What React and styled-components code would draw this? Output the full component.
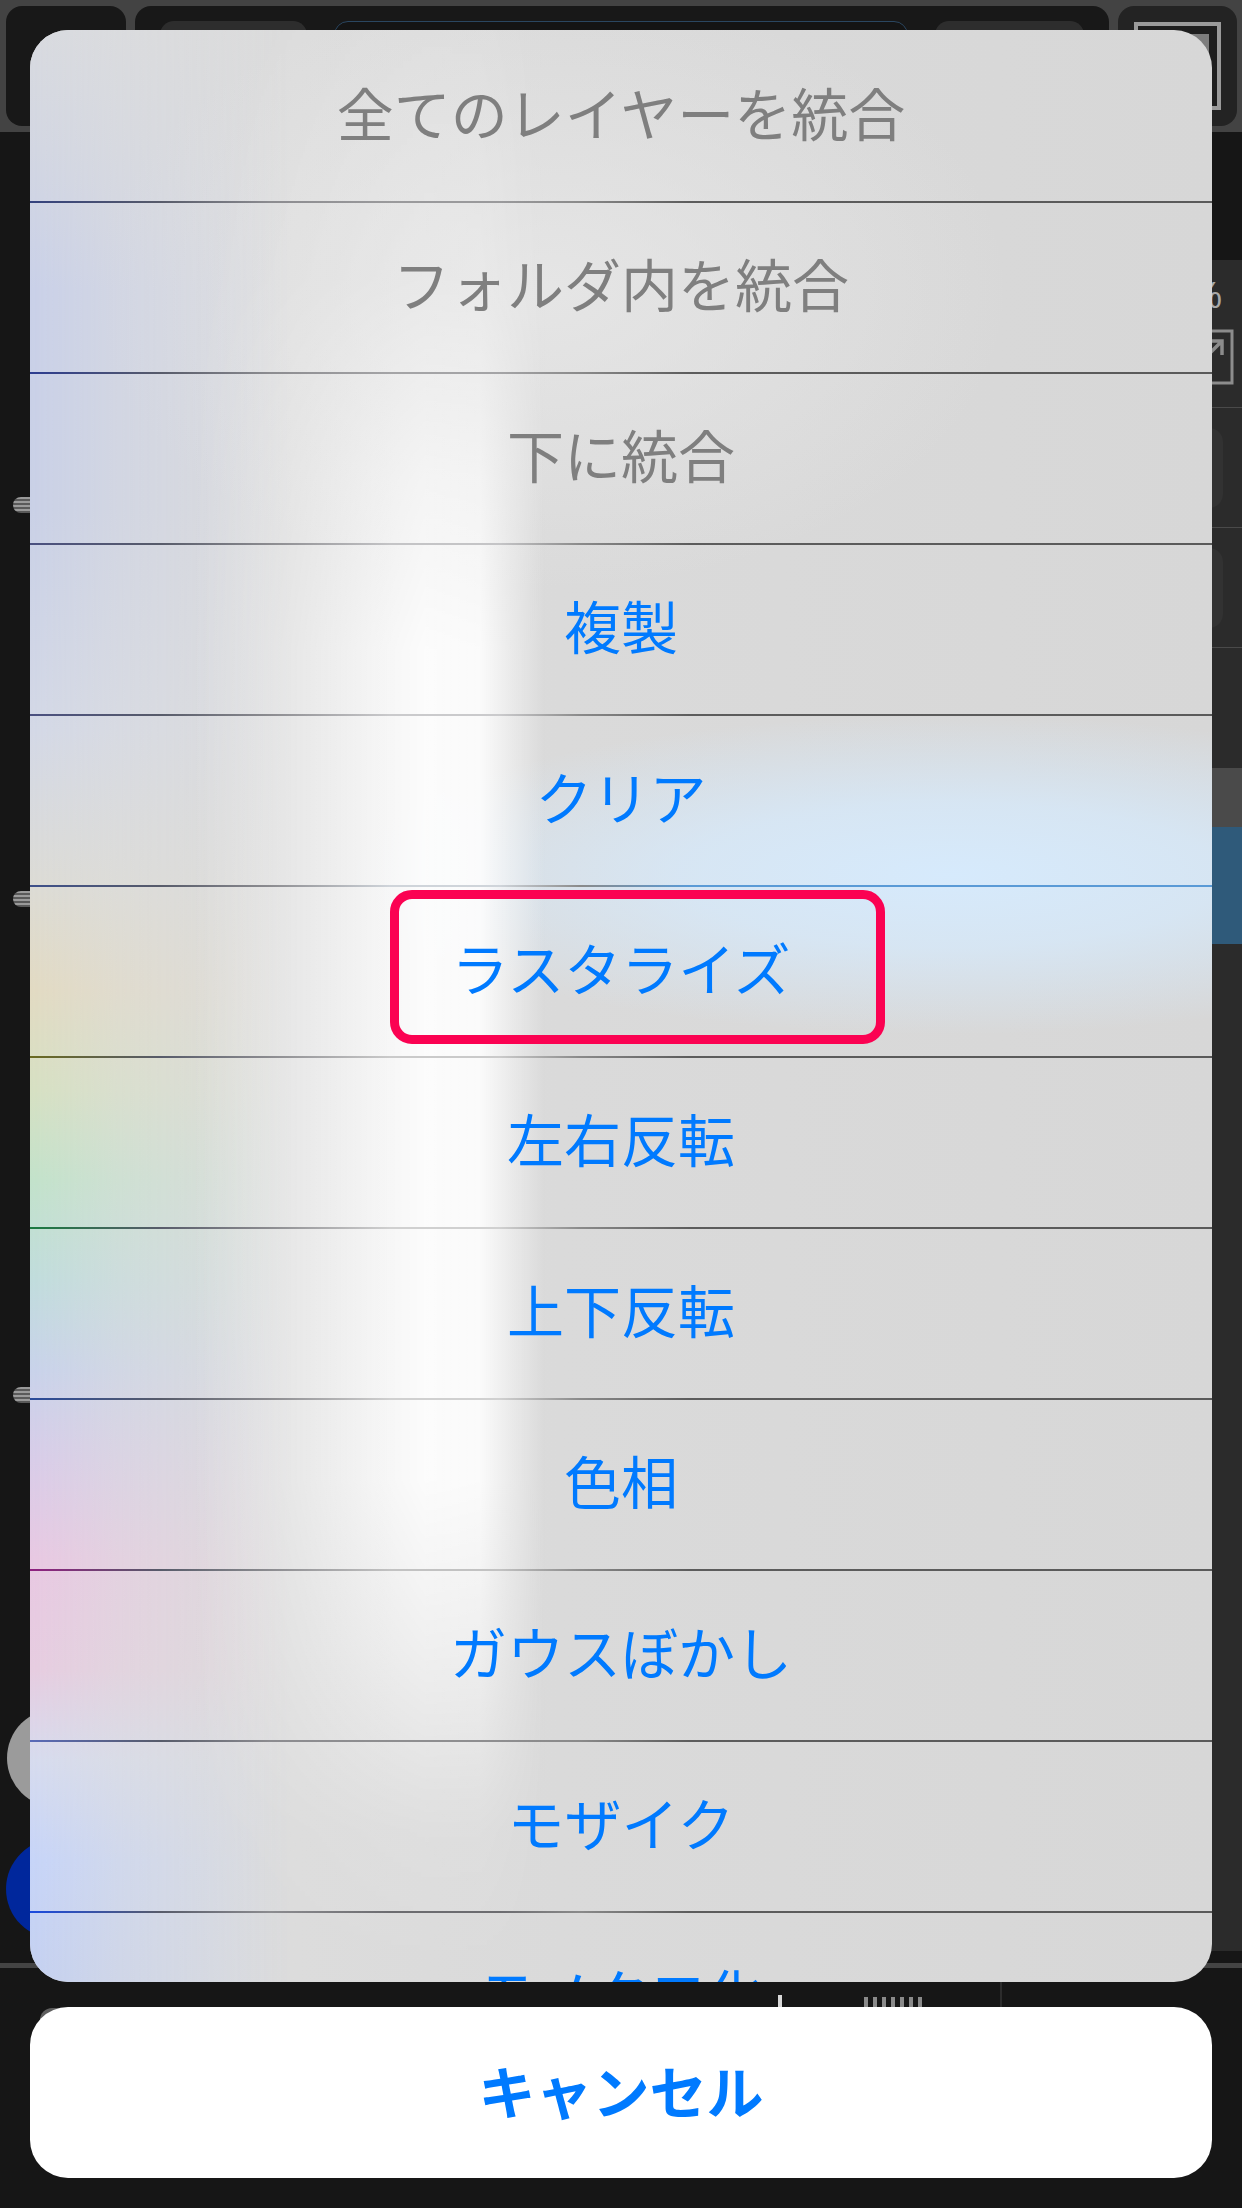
import React from "react";
import styled, { createGlobalStyle } from "styled-components";

const Global = createGlobalStyle`
  html, body { margin: 0; padding: 0; background: #161616; }
  body { font-family: "Noto Sans CJK JP", "Noto Sans", sans-serif; }
  * { box-sizing: border-box; }
`;

const Page = styled.div`
  position: relative;
  width: 1242px;
  height: 2208px;
  overflow: hidden;
  background: #161616;
`;

const Shell = styled.div`
  display: flex;
  flex-direction: column;
  height: 100%;
`;

/* ---------- background app ---------- */
const TopBar = styled.header`
  flex: none;
  height: 132px;
  background: #434343;
  display: flex;
  gap: 9px;
  padding: 6px 7px 6px 6px;
`;

const TopTile = styled.div`
  flex: ${(p) => (p.$grow ? "1 1 auto" : "none")};
  width: ${(p) => (p.$w ? `${p.$w}px` : "auto")};
  background: ${(p) => p.$bg || "#181818"};
  border-radius: 16px;
  display: flex;
  align-items: flex-start;
  gap: ${(p) => p.$gap || 0}px;
  padding: ${(p) => p.$pad || "0"};
`;

const TopChip = styled.div`
  flex: none;
  width: ${(p) => p.$w}px;
  height: 90px;
  border-radius: 14px;
  background: ${(p) => (p.$dark ? "#141414" : "#2d2d2d")};
  border: ${(p) => (p.$dark ? "1px solid #2a4660" : "none")};
`;

const CanvasIcon = styled.div`
  width: 88px;
  height: 88px;
  border: 4px solid #9a9a9a;
  background: #1e1e1e;
  display: flex;
  justify-content: flex-end;
  padding: 8px;
  &::after {
    content: "";
    width: 44px;
    height: 44px;
    background: #7d7d7d;
  }
`;

const Workspace = styled.div`
  flex: none;
  height: 1831px;
  display: flex;
`;

const LeftRail = styled.div`
  flex: none;
  width: 130px;
  display: flex;
  flex-direction: column;
  padding-top: 365px;
`;

const Handle = styled.div`
  flex: none;
  width: 40px;
  height: 16px;
  margin-left: 13px;
  margin-top: ${(p) => p.$top || 0}px;
  border-radius: 8px 0 0 8px;
  background: repeating-linear-gradient(
    to bottom,
    #9a9a9a 0px,
    #9a9a9a 2px,
    #5a5a5a 2px,
    #5a5a5a 4px
  );
`;

const ColorDot = styled.div`
  flex: none;
  width: ${(p) => p.$size}px;
  height: ${(p) => p.$size}px;
  border-radius: 50%;
  margin-left: ${(p) => p.$left}px;
  margin-top: ${(p) => p.$top}px;
  background: ${(p) => p.$color};
`;

const CanvasArea = styled.main`
  flex: 1;
`;

const RightPanel = styled.aside`
  flex: none;
  width: 330px;
  margin: 128px 0 12px;
  background: #2b2b2b;
  display: flex;
  flex-direction: column;
`;

const OpacityBlock = styled.div`
  height: 148px;
  border-bottom: 1px solid #4a4a4a;
  display: flex;
  flex-direction: column;
  align-items: flex-end;
  padding: 16px 8px 0 0;
  gap: 13px;
`;

const OpacityText = styled.span`
  font-family: "Liberation Sans", Arial, sans-serif;
  font-size: 36px;
  line-height: 40px;
  color: #a8a8a8;
  padding-right: 12px;
`;

const LayerRow = styled.div`
  height: ${(p) => p.$h}px;
  flex: none;
  background: ${(p) => p.$bg || "transparent"};
  border-bottom: ${(p) => (p.$line ? "1px solid #4a4a4a" : "none")};
  display: flex;
  justify-content: flex-end;
  align-items: center;
  padding-right: 19px;
`;

const LayerThumb = styled.div`
  width: 120px;
  height: 80px;
  border-radius: 14px;
  background: #323232;
`;

const BottomBar = styled.footer`
  flex: 1;
  border-top: 5px solid #444;
  display: flex;
  align-items: flex-start;
`;

const BottomBlock = styled.div`
  flex: none;
  width: 34px;
  height: 60px;
  margin: 40px 0 0 40px;
  border-radius: 12px 0 0 12px;
  background: #5e5e5e;
`;

const BottomTick = styled.div`
  flex: none;
  width: 4px;
  height: 20px;
  margin: 27px 0 0 704px;
  background: #d8d8d8;
`;

const BottomDots = styled.div`
  flex: none;
  width: 63px;
  height: 12px;
  margin: 29px 0 0 82px;
  background: repeating-linear-gradient(
    to right,
    #8a8a8a 0px,
    #8a8a8a 4px,
    transparent 4px,
    transparent 9px
  );
`;

const BottomDivider = styled.div`
  flex: none;
  width: 2px;
  height: 120px;
  margin: 8px 0 0 73px;
  background: #2c2c2c;
`;

/* ---------- action sheet ---------- */
const Overlay = styled.div`
  position: absolute;
  inset: 0;
  padding: 30px;
  display: flex;
  flex-direction: column;
  gap: 25px;
`;

const bandMask = `linear-gradient(
  to bottom,
  rgba(0, 0, 0, 0.08) 0px,
  rgba(0, 0, 0, 0.22) 250px,
  rgba(0, 0, 0, 0.7) 450px,
  rgba(0, 0, 0, 0.95) 620px,
  rgba(0, 0, 0, 0.95) 1450px,
  rgba(0, 0, 0, 0.6) 1620px,
  rgba(0, 0, 0, 0.12) 1800px,
  rgba(0, 0, 0, 0) 1952px
)`;

const tintMask = `linear-gradient(to right, #000 0px, rgba(0, 0, 0, 0.55) 90px, rgba(0, 0, 0, 0) 260px)`;

const Sheet = styled.div`
  position: relative;
  isolation: isolate;
  flex: none;
  height: 1952px;
  border-radius: 38px;
  overflow: hidden;
  padding-top: 2px;
  display: flex;
  flex-direction: column;
  background:
    radial-gradient(
      ellipse 600px 160px at 920px 845px,
      rgba(214, 234, 252, 1) 0%,
      rgba(214, 234, 252, 0.75) 45%,
      rgba(214, 234, 252, 0) 100%
    ),
    radial-gradient(
      ellipse 460px 300px at 520px 260px,
      rgba(232, 232, 232, 0.8) 0%,
      rgba(232, 232, 232, 0) 100%
    ),
    linear-gradient(to right, #dedede 0%, #dadada 45%, #d7d7d7 100%);

  &::before {
    content: "";
    position: absolute;
    left: 0;
    top: 0;
    bottom: 0;
    width: 320px;
    z-index: 0;
    pointer-events: none;
    background: linear-gradient(
      to bottom,
      #d8dadf 0px,
      #d2d6e2 120px,
      #c9d0e8 260px,
      #c9d0e6 480px,
      #d3d8e6 700px,
      #dcdbd4 860px,
      #e2dac2 960px,
      #d6e0c2 1060px,
      #c2e2ca 1150px,
      #c0dcdc 1250px,
      #c8d2ea 1340px,
      #d8cce8 1430px,
      #e8c8e2 1530px,
      #e6cce0 1640px,
      #d6dbee 1730px,
      #c6d4f8 1830px,
      #c4d0f0 1952px
    );
    -webkit-mask-image: ${tintMask};
    mask-image: ${tintMask};
  }

  &::after {
    content: "";
    position: absolute;
    left: 150px;
    top: 0;
    bottom: 0;
    width: 400px;
    z-index: 0;
    pointer-events: none;
    background: linear-gradient(
      to right,
      rgba(255, 255, 255, 0) 10px,
      rgba(255, 255, 255, 0.35) 110px,
      rgba(255, 255, 255, 0.75) 195px,
      rgba(255, 255, 255, 0.95) 245px,
      rgba(255, 255, 255, 0.92) 300px,
      rgba(255, 255, 255, 0.45) 332px,
      rgba(255, 255, 255, 0) 365px
    );
    -webkit-mask-image: ${bandMask};
    mask-image: ${bandMask};
  }
`;

const Row = styled.div`
  position: relative;
  z-index: 1;
  flex: none;
  height: 169px;
  padding-bottom: 10px;
  display: flex;
  align-items: center;
  justify-content: center;
`;

const Label = styled.span`
  font-size: 57px;
  line-height: 1;
  color: ${(p) => (p.$muted ? "#7f7f7f" : "#007aff")};
  white-space: nowrap;
`;

const Separator = styled.div`
  position: relative;
  z-index: 1;
  flex: none;
  height: 2px;
  background: linear-gradient(
    to right,
    ${(p) => p.$left} 0px,
    #575b6a 130px,
    #8c8c90 240px,
    ${(p) => p.$peak} 360px,
    ${(p) => p.$peak} 470px,
    #8a8a8a 550px,
    ${(p) => p.$right || "#5c5c5c"} 660px,
    ${(p) => p.$right || "#5a5a5a"} 100%
  );
`;

const Highlight = styled.div`
  position: absolute;
  left: 360px;
  top: 3px;
  width: 495px;
  height: 154px;
  border: 9px solid #fb0252;
  border-radius: 22px;
  pointer-events: none;
`;

const CancelButton = styled.button`
  flex: none;
  height: 171px;
  border: none;
  border-radius: 38px;
  background: #ffffff;
  font-family: "Noto Sans CJK JP", "Noto Sans", sans-serif;
  font-size: 57px;
  font-weight: 700;
  color: #007aff;
  display: flex;
  align-items: center;
  justify-content: center;
  padding: 0 0 8px;
`;

const items = [
  { text: "全てのレイヤーを統合", muted: true, sep: { left: "#34427e", peak: "#9a9a9c" } },
  { text: "フォルダ内を統合", muted: true, sep: { left: "#2c3c90", peak: "#a4a4a6" } },
  { text: "下に統合", muted: true, sep: { left: "#4a5080", peak: "#c4c4c6" } },
  { text: "複製", sep: { left: "#4a5080", peak: "#cacacc" } },
  { text: "クリア", sep: { left: "#3d4f8a", peak: "#cfd4da", right: "#5a9ad6" } },
  { text: "ラスタライズ", highlight: true, sep: { left: "#6a6a20", peak: "#cacaca" } },
  { text: "左右反転", sep: { left: "#1a7a40", peak: "#d0d0d0" } },
  { text: "上下反転", sep: { left: "#2a4a9a", peak: "#d0d0d0" } },
  { text: "色相", sep: { left: "#902080", peak: "#c2c2c2" } },
  { text: "ガウスぼかし", sep: { left: "#5a6ab8", peak: "#8e8e90" } },
  { text: "モザイク", sep: { left: "#1a4ae0", peak: "#6c6c70" } },
  { text: "モノクロ化" },
];

function ExternalIcon() {
  return (
    <svg width="56" height="56" viewBox="0 0 56 56" fill="none">
      <rect x="2" y="2" width="52" height="52" stroke="#8c8c8c" strokeWidth="3" />
      <path d="M22 34 L44 12 M30 12 H44 V26" stroke="#8c8c8c" strokeWidth="3.5" />
    </svg>
  );
}

export default function App() {
  return (
    <Page>
      <Global />
      <Shell>
        <TopBar>
          <TopTile $w={120} />
          <TopTile $grow $gap={27} $pad="15px 25px">
            <TopChip $w={147} />
            <TopChip $w={574} $dark />
            <TopChip $w={149} />
          </TopTile>
          <TopTile $w={119} $bg="#232323" $pad="16px">
            <CanvasIcon />
          </TopTile>
        </TopBar>

        <Workspace>
          <LeftRail>
            <Handle />
            <Handle $top={378} />
            <Handle $top={480} />
            <ColorDot $size={98} $left={7} $top={306} $color="#9b9b9b" />
            <ColorDot $size={100} $left={6} $top={32} $color="#00279c" />
          </LeftRail>
          <CanvasArea />
          <RightPanel>
            <OpacityBlock>
              <OpacityText>100%</OpacityText>
              <ExternalIcon />
            </OpacityBlock>
            <LayerRow $h={120} $line>
              <LayerThumb />
            </LayerRow>
            <LayerRow $h={120} $line>
              <LayerThumb />
            </LayerRow>
            <LayerRow $h={120} />
            <LayerRow $h={59} $bg="#4a4a4a" />
            <LayerRow $h={117} $bg="#2f5a7a" />
          </RightPanel>
        </Workspace>

        <BottomBar>
          <BottomBlock />
          <BottomTick />
          <BottomDots />
          <BottomDivider />
        </BottomBar>
      </Shell>

      <Overlay>
        <Sheet>
          {items.map((it) => (
            <React.Fragment key={it.text}>
              <Row>
                <Label $muted={it.muted}>{it.text}</Label>
                {it.highlight && <Highlight />}
              </Row>
              {it.sep && (
                <Separator $left={it.sep.left} $peak={it.sep.peak} $right={it.sep.right} />
              )}
            </React.Fragment>
          ))}
        </Sheet>
        <CancelButton>キャンセル</CancelButton>
      </Overlay>
    </Page>
  );
}
